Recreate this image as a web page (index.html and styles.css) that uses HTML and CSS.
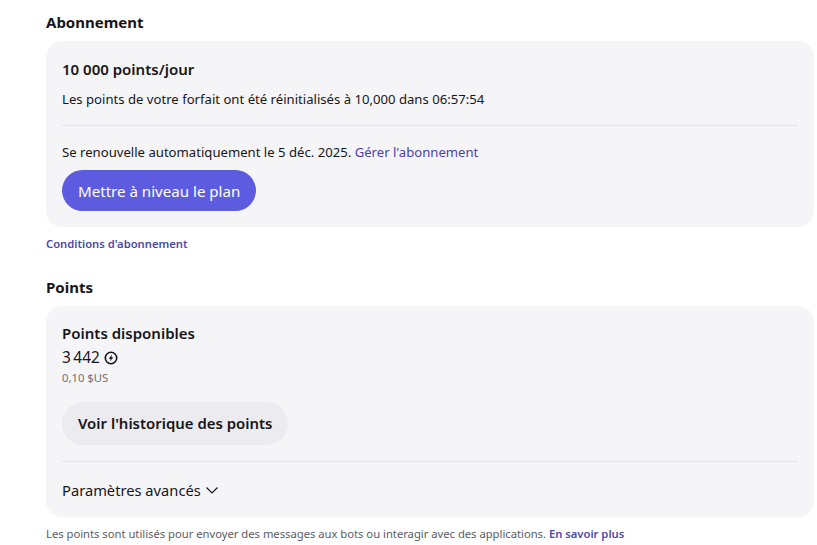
FILE: index.html
```html
<!DOCTYPE html>
<html lang="fr">
<head>
  <meta charset="UTF-8">
  <title>Abonnement</title>
  <link rel="stylesheet" href="styles.css">
</head>
<body>

  <section class="section">
    <h2 class="section-title">Abonnement</h2>
    <div class="card">
      <h3 class="plan-name">10 000 points/jour</h3>
      <p class="plan-reset">Les points de votre forfait ont été réinitialisés à 10,000 dans 06:57:54</p>
      <hr class="divider divider-plan">
      <p class="renew">Se renouvelle automatiquement le 5 déc. 2025. <a class="link" href="#">Gérer l'abonnement</a></p>
      <button class="btn btn-primary" type="button">Mettre à niveau le plan</button>
    </div>
    <p class="note"><a class="note-link" href="#">Conditions d'abonnement</a></p>
  </section>

  <section class="section section-points">
    <h2 class="section-title">Points</h2>
    <div class="card">
      <h3 class="points-title">Points disponibles</h3>
      <div class="points-count">
        <span>3&#8239;442</span>
        <svg class="bolt" width="14" height="14" viewBox="0 0 14 14" aria-hidden="true">
          <circle cx="7" cy="7" r="5.7" fill="none" stroke="#16161a" stroke-width="1.6"/>
          <path d="M8.2 3.4 4.6 7.7h2l-.8 2.9 3.6-4.3h-2z" fill="#16161a"/>
        </svg>
      </div>
      <div class="points-price">0,10 $US</div>
      <button class="btn btn-secondary" type="button">Voir l'historique des points</button>
      <hr class="divider divider-points">
      <div class="advanced">
        <span>Paramètres avancés</span>
        <svg width="14" height="14" viewBox="0 0 14 14" aria-hidden="true">
          <path d="M1.5 4.5 7 10l5.5-5.5" fill="none" stroke="#16161a" stroke-width="1.2"/>
        </svg>
      </div>
    </div>
    <p class="note note-plain">Les points sont utilisés pour envoyer des messages aux bots ou interagir avec des applications. <a class="note-link" href="#">En savoir plus</a></p>
  </section>

</body>
</html>
```

FILE: styles.css
```css
html, body { margin: 0; padding: 0; overflow: hidden; }
body { font-family: "Noto Sans", "Open Sans", Arial, sans-serif; color: #16161a; background-color: #fff; padding: 12px 3px 0 46px; }
h2, h3, p { margin: 0; }

.section-title { font-size: 15px; line-height: 21px; font-weight: 700; margin-bottom: 8px; }
.section-points { margin-top: 25px; }

.card { background-color: #f5f5f8; border-radius: 16px; padding: 16px; }
.plan-name { font-size: 15px; line-height: 24px; font-weight: 600; }
.plan-reset { font-size: 13.13px; line-height: 20px; margin-top: 8px; }
.divider { border: none; border-top: 1px solid #e3e3e8; margin: 0; }
.divider-plan { margin-top: 16px; }
.renew { font-size: 13.13px; line-height: 20px; margin-top: 16px; }
.link { color: #4b3fa8; text-decoration: none; }

.btn { display: block; border: none; border-radius: 22px; padding: 0 16px; font-family: inherit; font-size: 15.1px; cursor: pointer; }
.btn-primary { height: 41px; margin-top: 8px; background-color: #5d5ce0; color: #fff; }
.btn-secondary { height: 43px; margin-top: 16px; padding-bottom: 2px; background-color: #ebebf0; color: #16161a; font-size: 14.93px; font-weight: 600; }

.note { font-size: 11.22px; line-height: 16px; margin-top: 9px; color: #5b5b66; }
.note-link { color: #4b4aa8; font-weight: 600; text-decoration: none; }

.points-title { font-size: 15px; line-height: 24px; font-weight: 600; margin-top: -1px; }
.points-count { display: flex; align-items: center; gap: 4px; font-size: 15.4px; line-height: 22px; margin-top: 2px; }
.points-price { font-size: 11.3px; line-height: 16px; color: #7a6f6a; margin-top: 1px; }
.divider-points { margin-top: 16px; }
.advanced { display: flex; align-items: center; gap: 4px; font-size: 14.7px; line-height: 22px; margin-top: 17px; }
```
